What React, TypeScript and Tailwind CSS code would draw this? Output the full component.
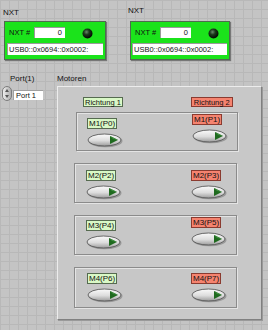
import React from 'react';

const OkButton: React.FC = () => (
  <svg width="36" height="15" viewBox="0 0 36 15">
    <defs>
      <linearGradient id="btnFill" x1="0" y1="0" x2="0" y2="1">
        <stop offset="0" stopColor="#fbfbfb" />
        <stop offset="0.55" stopColor="#dcdcdc" />
        <stop offset="1" stopColor="#9c9c9c" />
      </linearGradient>
    </defs>
    <ellipse cx="18.5" cy="8" rx="17" ry="6.3" fill="#7a7a7a" opacity="0.6" />
    <ellipse cx="17.5" cy="7" rx="16.5" ry="6" fill="url(#btnFill)" stroke="#5a5a5a" strokeWidth="0.9" />
    <polygon points="23,3 31,7 23,11" fill="#1f6a1f" />
    <polygon points="23,3 31,7 26,6" fill="#3f8f3f" />
  </svg>
);

const Led: React.FC = () => (
  <svg width="11" height="11" viewBox="0 0 11 11">
    <defs>
      <radialGradient id="ledFill" cx="0.4" cy="0.35" r="0.6">
        <stop offset="0" stopColor="#6a8a6a" />
        <stop offset="0.45" stopColor="#1c3a1c" />
        <stop offset="1" stopColor="#050c05" />
      </radialGradient>
    </defs>
    <circle cx="5.5" cy="5.5" r="5" fill="url(#ledFill)" />
  </svg>
);

const NxtCluster: React.FC<{ outer: string; labelClass: string; boxClass: string; strWidth: string; strLeft: string }> = ({
  outer,
  labelClass,
  boxClass,
  strWidth,
  strLeft,
}) => (
  <div className={outer}>
    <div className={labelClass}>NXT</div>
    <div className={boxClass}>
      <div className="flex items-center pt-[4px] h-[17px]">
        <span className="w-[29px] pl-[4px] text-[7.5px] leading-[11px]">NXT #</span>
        <div className="w-[31px] h-[11px] bg-white border-t border-l border-[#9a9a9a] text-right pr-[3px] text-[7.5px] leading-[10px]">
          0
        </div>
        <div className="ml-[17px] mt-[1px] flex">
          <Led />
        </div>
      </div>
      <div className={`mt-[4px] h-[12px] bg-white border-t border-l border-[#9a9a9a] pl-[1px] text-[7.5px] leading-[11px] ${strWidth} ${strLeft}`}>
        USB0::0x0694::0x0002:
      </div>
    </div>
  </div>
);

const MLabel: React.FC<{ text: string; red?: boolean }> = ({ text, red }) => (
  <div
    className={`px-[1px] h-[11px] text-[8px] leading-[10px] border ${
      red ? 'bg-[#f5836f] border-[#8a3b30]' : 'bg-[#d9f8c6] border-[#566b50]'
    }`}
  >
    {text}
  </div>
);

const MotorPair: React.FC<{
  frameClass: string;
  left: string;
  right: string;
  leftCol: string;
  rightCol: string;
  leftBtn: string;
  rightBtn: string;
}> = ({ frameClass, left, right, leftCol, rightCol, leftBtn, rightBtn }) => (
  <div className={`border border-[#8b8b8b] shadow-[1px_1px_0_#e4e4e4,inset_1px_1px_0_#e4e4e4] bg-[#c7c7c7] flex justify-between ${frameClass}`}>
    <div className={`flex flex-col items-start ${leftCol}`}>
      <MLabel text={left} />
      <div className={leftBtn}>
        <OkButton />
      </div>
    </div>
    <div className={`flex flex-col items-start w-[36px] ${rightCol}`}>
      <MLabel text={right} red />
      <div className={rightBtn}>
        <OkButton />
      </div>
    </div>
  </div>
);

export default function App() {
  return (
    <div className="w-[268px] h-[330px] overflow-hidden bg-[#c4c4c4] bg-[image:linear-gradient(to_right,#b8b8b8_1px,transparent_1px),linear-gradient(to_bottom,#b8b8b8_1px,transparent_1px)] bg-[size:9px_9px] text-[#111] font-['Liberation_Sans',Arial,sans-serif]">
      {/* NXT clusters */}
      <div className="flex items-start h-[73px]">
        <NxtCluster
          outer="ml-[4px] pt-[8px]"
          labelClass="text-[8px] leading-[10px] -ml-[1px]"
          boxClass="mt-[3px] w-[102px] h-[39px] bg-[#1be31b] border border-[#4f6a4f] shadow-[1px_1px_1px_#777]"
          strWidth="w-[96px]"
          strLeft="ml-[2px]"
        />
        <NxtCluster
          outer="ml-[24px] pt-[6px]"
          labelClass="text-[8px] leading-[10px] -ml-[2px]"
          boxClass="mt-[5px] w-[100px] h-[39px] bg-[#1be31b] border border-[#4f6a4f] shadow-[1px_1px_1px_#777]"
          strWidth="w-[95px]"
          strLeft="ml-[1px]"
        />
      </div>

      <div className="flex items-start">
        {/* Port control */}
        <div className="w-[57px] flex flex-col">
          <div className="pl-[10px] pt-[1px] text-[8px] leading-[10px]">Port(1)</div>
          <div className="flex items-center mt-[2px] pl-[2px]">
            <svg width="10" height="15" viewBox="0 0 10 15">
              <defs>
                <linearGradient id="spin" x1="0" y1="0" x2="1" y2="0">
                  <stop offset="0" stopColor="#f2f2f2" />
                  <stop offset="1" stopColor="#a8a8a8" />
                </linearGradient>
              </defs>
              <rect x="0.5" y="0.5" width="9" height="14" rx="4.5" fill="url(#spin)" stroke="#7c7c7c" />
              <polygon points="5,3 7,6 3,6" fill="#555" />
              <polygon points="5,12 7,9 3,9" fill="#555" />
            </svg>
            <div className="ml-[1px] mt-[2px] w-[30px] h-[10px] bg-white border-t border-l border-[#a0a0a0] pl-[2px] text-[7.5px] leading-[9px]">
              Port 1
            </div>
          </div>
        </div>

        {/* Motoren */}
        <div className="flex flex-col">
          <div className="pt-[1px] text-[8px] leading-[10px]">Motoren</div>
          <div className="mt-[2px] w-[205px] h-[234px] bg-[#c8c8c8] border border-t-[#ececec] border-l-[#ececec] border-b-[#808080] border-r-[#808080] shadow-[1px_1px_0_#9a9a9a]">
            <div className="flex pt-[10px] h-[25px]">
              <div className="ml-[25px] px-[1px] h-[10px] text-[7.5px] leading-[9px] border bg-[#d9f8c6] border-[#566b50]">
                Richtung 1
              </div>
              <div className="ml-[68px] px-[2px] h-[10px] text-[7.5px] leading-[9px] border bg-[#f5836f] border-[#8a3b30]">
                Richtung 2
              </div>
            </div>
            <div className="flex flex-col gap-[12px]">
              <MotorPair
                frameClass="ml-[18px] w-[162px] h-[39px] pr-[9px]"
                left="M1(P0)"
                right="M1(P1)"
                leftCol="pl-[10px] pt-[5px]"
                rightCol="pt-[1px]"
                leftBtn="mt-[4px]"
                rightBtn="mt-[4px]"
              />
              <MotorPair
                frameClass="ml-[16px] w-[163px] h-[40px] pr-[9px]"
                left="M2(P2)"
                right="M2(P3)"
                leftCol="pl-[11px] pt-[6px]"
                rightCol="pt-[6px]"
                leftBtn="mt-[4px]"
                rightBtn="mt-[4px]"
              />
              <MotorPair
                frameClass="ml-[16px] w-[163px] h-[40px] pr-[9px]"
                left="M3(P4)"
                right="M3(P5)"
                leftCol="pl-[11px] pt-[4px]"
                rightCol="pt-[1px]"
                leftBtn="mt-[4px]"
                rightBtn="mt-[4px]"
              />
              <MotorPair
                frameClass="ml-[16px] w-[163px] h-[41px] pr-[9px]"
                left="M4(P6)"
                right="M4(P7)"
                leftCol="pl-[12px] pt-[5px]"
                rightCol="pt-[5px]"
                leftBtn="mt-[4px]"
                rightBtn="mt-[4px]"
              />
            </div>
          </div>
        </div>
      </div>
    </div>
  );
}
